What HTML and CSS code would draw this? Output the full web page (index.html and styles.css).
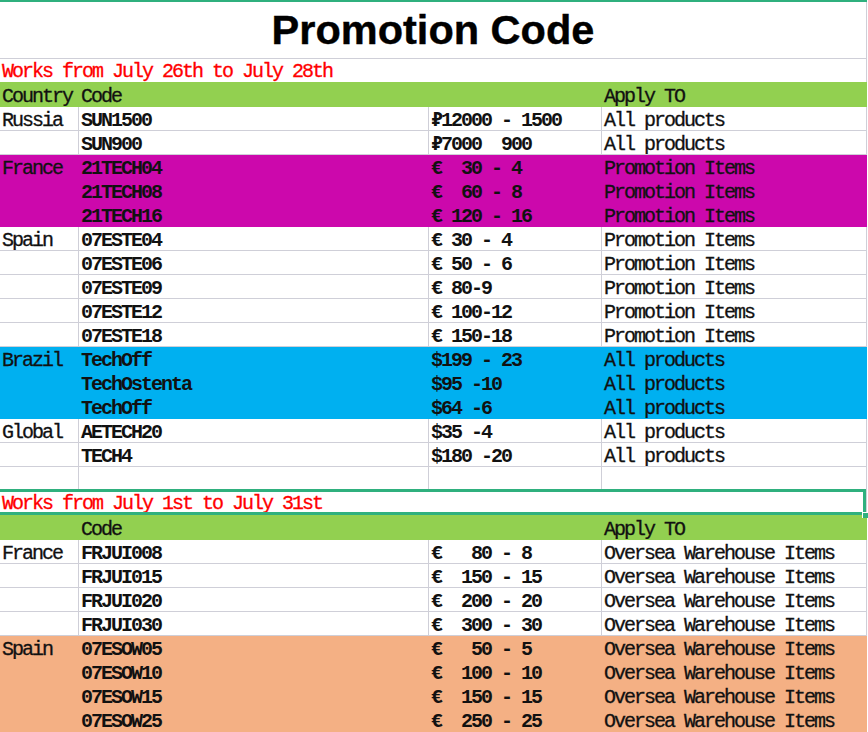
FILE: index.html
```html
<!DOCTYPE html>
<html>
<head>
<meta charset="utf-8">
<link rel="stylesheet" href="styles.css">
</head>
<body>
<div class="sheet">
  <div class="topline"></div>
  <div class="title">Promotion Code</div>
  <div class="note">Works from July 26th to July 28th</div>
  <div class="row head"><div class="c">Country</div><div class="c">Code</div><div class="c"></div><div class="c">Apply TO</div></div>

  <div class="row"><div class="c">Russia</div><div class="c b">SUN1500</div><div class="c b">₽12000 - 1500</div><div class="c">All products</div></div>
  <div class="row"><div class="c"></div><div class="c b">SUN900</div><div class="c b">₽7000  900</div><div class="c">All products</div></div>

  <div class="row mag"><div class="c">France</div><div class="c b">21TECH04</div><div class="c b"><span class="w">€</span> 30 - 4</div><div class="c">Promotion Items</div></div>
  <div class="row mag"><div class="c"></div><div class="c b">21TECH08</div><div class="c b"><span class="w">€</span> 60 - 8</div><div class="c">Promotion Items</div></div>
  <div class="row mag"><div class="c"></div><div class="c b">21TECH16</div><div class="c b"><span class="w">€</span>120 - 16</div><div class="c">Promotion Items</div></div>

  <div class="row"><div class="c">Spain</div><div class="c b">07ESTE04</div><div class="c b"><span class="w">€</span>30 - 4</div><div class="c">Promotion Items</div></div>
  <div class="row"><div class="c"></div><div class="c b">07ESTE06</div><div class="c b"><span class="w">€</span>50 - 6</div><div class="c">Promotion Items</div></div>
  <div class="row"><div class="c"></div><div class="c b">07ESTE09</div><div class="c b"><span class="w">€</span>80-9</div><div class="c">Promotion Items</div></div>
  <div class="row"><div class="c"></div><div class="c b">07ESTE12</div><div class="c b"><span class="w">€</span>100-12</div><div class="c">Promotion Items</div></div>
  <div class="row"><div class="c"></div><div class="c b">07ESTE18</div><div class="c b"><span class="w">€</span>150-18</div><div class="c">Promotion Items</div></div>

  <div class="row blue"><div class="c">Brazil</div><div class="c b">TechOff</div><div class="c b">$199 - 23</div><div class="c">All products</div></div>
  <div class="row blue"><div class="c"></div><div class="c b">TechOstenta</div><div class="c b">$95 -10</div><div class="c">All products</div></div>
  <div class="row blue"><div class="c"></div><div class="c b">TechOff</div><div class="c b">$64 -6</div><div class="c">All products</div></div>

  <div class="row"><div class="c">Global</div><div class="c b">AETECH20</div><div class="c b">$35 -4</div><div class="c">All products</div></div>
  <div class="row"><div class="c"></div><div class="c b">TECH4</div><div class="c b">$180 -20</div><div class="c">All products</div></div>
  <div class="row"><div class="c"></div><div class="c"></div><div class="c"></div><div class="c"></div></div>

  <div class="note note2">Works from July 1st to July 31st<span class="sel"></span><span class="handle"></span></div>
  <div class="row head"><div class="c"></div><div class="c">Code</div><div class="c"></div><div class="c">Apply TO</div></div>

  <div class="row"><div class="c">France</div><div class="c b">FRJUI008</div><div class="c b"><span class="w">€</span>  80 - 8</div><div class="c">Oversea Warehouse Items</div></div>
  <div class="row"><div class="c"></div><div class="c b">FRJUI015</div><div class="c b"><span class="w">€</span> 150 - 15</div><div class="c">Oversea Warehouse Items</div></div>
  <div class="row"><div class="c"></div><div class="c b">FRJUI020</div><div class="c b"><span class="w">€</span> 200 - 20</div><div class="c">Oversea Warehouse Items</div></div>
  <div class="row"><div class="c"></div><div class="c b">FRJUI030</div><div class="c b"><span class="w">€</span> 300 - 30</div><div class="c">Oversea Warehouse Items</div></div>

  <div class="row org"><div class="c">Spain</div><div class="c b">07ESOW05</div><div class="c b"><span class="w">€</span>  50 - 5</div><div class="c">Oversea Warehouse Items</div></div>
  <div class="row org"><div class="c"></div><div class="c b">07ESOW10</div><div class="c b"><span class="w">€</span> 100 - 10</div><div class="c">Oversea Warehouse Items</div></div>
  <div class="row org"><div class="c"></div><div class="c b">07ESOW15</div><div class="c b"><span class="w">€</span> 150 - 15</div><div class="c">Oversea Warehouse Items</div></div>
  <div class="row org"><div class="c"></div><div class="c b">07ESOW25</div><div class="c b"><span class="w">€</span> 250 - 25</div><div class="c">Oversea Warehouse Items</div></div>
</div>
</body>
</html>
```

FILE: styles.css
```css
html, body {
  margin: 0;
  padding: 0;
  background: #ffffff;
  overflow: hidden;
}

.sheet {
  width: 867px;
  font-family: "Liberation Mono", "DejaVu Sans Mono", monospace;
  font-size: 20px;
  letter-spacing: -2px;
  color: #111111;
  -webkit-text-stroke: 0.3px currentColor;
}

.topline {
  height: 2px;
  background: #2fb07e;
}

.title {
  height: 57px;
  box-sizing: border-box;
  border-right: 1px solid #cfcfd8;
  border-bottom: 1px solid #cfcfd8;
  font-family: "Liberation Sans", Arial, sans-serif;
  font-weight: bold;
  font-size: 41.5px;
  letter-spacing: 0;
  line-height: 56px;
  text-align: center;
  color: #000000;
  -webkit-text-stroke: 0.4px #000000;
}

.note {
  height: 23px;
  box-sizing: border-box;
  border-right: 1px solid #cfcfd8;
  color: #ff0000;
  padding-left: 2px;
  line-height: 20px;
  padding-top: 3px;
  white-space: pre;
}

.note2 {
  position: relative;
  height: 24px;
}

.sel {
  position: absolute;
  left: -4px;
  right: 0;
  top: -2px;
  bottom: 0;
  border: 3px solid #2fb07e;
}

.handle {
  position: absolute;
  right: -2px;
  bottom: -3px;
  width: 5px;
  height: 5px;
  background: #2fb07e;
  border-left: 1px solid #ffffff;
  border-top: 1px solid #ffffff;
}

.row {
  display: grid;
  grid-template-columns: 79px 350px 173px 265px;
  height: 24px;
}

.c {
  box-sizing: border-box;
  border-right: 1px solid #cfcfd8;
  border-bottom: 1px solid #cfcfd8;
  padding-left: 2px;
  padding-top: 4px;
  line-height: 19px;
  white-space: pre;
  overflow: hidden;
}

.b {
  font-weight: bold;
  -webkit-text-stroke: 0;
}

.w {
  display: inline-block;
  width: 20px;
}

.head {
  height: 25px;
  background: #92d050;
}

.head .c {
  border-color: transparent;
  padding-top: 5px;
}

.mag {
  background: #cc08ac;
}

.blue {
  background: #00b0f0;
}

.org {
  background: #f4b084;
}

.mag .c, .blue .c, .org .c {
  border-color: transparent;
}
```
